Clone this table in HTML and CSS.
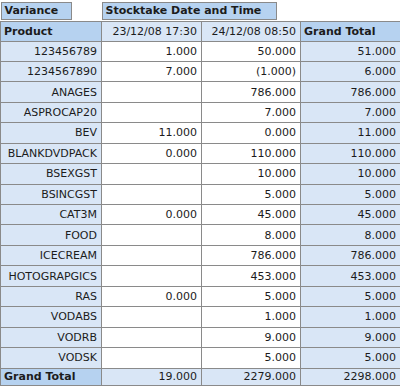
FILE: index.html
```html
<!DOCTYPE html>
<html>
<head>
<meta charset="utf-8">
<link rel="stylesheet" href="styles.css">
</head>
<body>
<table class="pivot">
  <colgroup>
    <col class="c1"><col class="c2"><col class="c3"><col class="c4">
  </colgroup>
  <tr class="fields">
    <td class="field-cell"><span class="chip">Variance</span></td>
    <td class="field-cell" colspan="3"><span class="chip chip-col">Stocktake Date and Time</span></td>
  </tr>
  <tr class="head">
    <th class="hd left">Product</th>
    <th class="lt num">23/12/08 17:30</th>
    <th class="lt num">24/12/08 08:50</th>
    <th class="hd left">Grand Total</th>
  </tr>
  <tr class="row"><th class="lt num">123456789</th><td class="num">1.000</td><td class="num">50.000</td><td class="lt num">51.000</td></tr>
  <tr class="row"><th class="lt num">1234567890</th><td class="num">7.000</td><td class="num">(1.000)</td><td class="lt num">6.000</td></tr>
  <tr class="row"><th class="lt num">ANAGES</th><td class="num"></td><td class="num">786.000</td><td class="lt num">786.000</td></tr>
  <tr class="row"><th class="lt num">ASPROCAP20</th><td class="num"></td><td class="num">7.000</td><td class="lt num">7.000</td></tr>
  <tr class="row"><th class="lt num">BEV</th><td class="num">11.000</td><td class="num">0.000</td><td class="lt num">11.000</td></tr>
  <tr class="row"><th class="lt num">BLANKDVDPACK</th><td class="num">0.000</td><td class="num">110.000</td><td class="lt num">110.000</td></tr>
  <tr class="row"><th class="lt num">BSEXGST</th><td class="num"></td><td class="num">10.000</td><td class="lt num">10.000</td></tr>
  <tr class="row"><th class="lt num">BSINCGST</th><td class="num"></td><td class="num">5.000</td><td class="lt num">5.000</td></tr>
  <tr class="row"><th class="lt num">CAT3M</th><td class="num">0.000</td><td class="num">45.000</td><td class="lt num">45.000</td></tr>
  <tr class="row"><th class="lt num">FOOD</th><td class="num"></td><td class="num">8.000</td><td class="lt num">8.000</td></tr>
  <tr class="row"><th class="lt num">ICECREAM</th><td class="num"></td><td class="num">786.000</td><td class="lt num">786.000</td></tr>
  <tr class="row"><th class="lt num">HOTOGRAPGICS</th><td class="num"></td><td class="num">453.000</td><td class="lt num">453.000</td></tr>
  <tr class="row"><th class="lt num">RAS</th><td class="num">0.000</td><td class="num">5.000</td><td class="lt num">5.000</td></tr>
  <tr class="row"><th class="lt num">VODABS</th><td class="num"></td><td class="num">1.000</td><td class="lt num">1.000</td></tr>
  <tr class="row"><th class="lt num">VODRB</th><td class="num"></td><td class="num">9.000</td><td class="lt num">9.000</td></tr>
  <tr class="row"><th class="lt num">VODSK</th><td class="num"></td><td class="num">5.000</td><td class="lt num">5.000</td></tr>
  <tr class="total"><th class="hd left">Grand Total</th><td class="lt num">19.000</td><td class="lt num">2279.000</td><td class="lt num">2298.000</td></tr>
</table>
</body>
</html>
```

FILE: styles.css
```css
html, body {
  margin: 0;
  padding: 0;
  background: #ffffff;
}

body {
  font-family: "DejaVu Sans", Verdana, sans-serif;
  font-size: 11px;
  color: #1c1c1c;
}

.pivot {
  border-collapse: collapse;
  table-layout: fixed;
  width: 400px;
}

.c1 { width: 101px; }
.c2 { width: 100px; }
.c3 { width: 99px; }
.c4 { width: 100px; }

.pivot tr.fields { height: 21px; }
.pivot tr.head { height: 20px; }
.pivot tr.row { height: 20.44px; }
.pivot tr.total { height: 17px; }

.pivot th,
.pivot td {
  border: 1px solid #8a8a8a;
  padding: 0 4px 0 3px;
  line-height: 13px;
  white-space: nowrap;
  overflow: hidden;
  font-weight: normal;
}

.pivot tr.fields td.field-cell {
  border: none;
  border-bottom: 1px solid #8a8a8a;
  padding: 0;
  vertical-align: top;
  background: #ffffff;
}

.chip {
  display: inline-block;
  box-sizing: border-box;
  margin-top: 2px;
  height: 18px;
  line-height: 16px;
  padding: 0 6px 0 3px;
  background: #b6d2f0;
  border: 1px solid #8a8a8a;
  font-weight: bold;
  width: 71px;
}

.chip-col {
  width: 175px;
}

.pivot .hd {
  background: #b6d2f0;
  font-weight: bold;
  text-align: left;
  padding-left: 3px;
}

.pivot .lt {
  background: #d9e6f6;
}

.pivot .num {
  text-align: right;
}

.pivot .left {
  text-align: left;
}
```
